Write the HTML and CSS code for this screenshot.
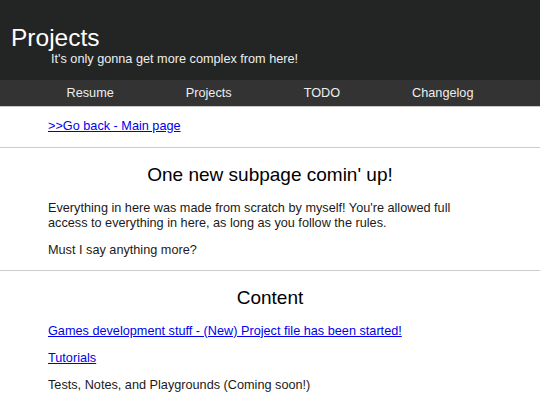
FILE: index.html
```html
<!DOCTYPE html>
<html lang="en">
<head>
    <meta charset="UTF-8">
    <meta name="viewport" content="width=device-width, initial-scale=1.0">
    <title>Projects</title>
    <link rel="stylesheet" href="styles.css">
</head>
<body>
    <header class="top">
        <h1 class="title">Projects</h1>
        <p class="subtitle">It's only gonna get more complex from here!</p>
    </header>
    <nav class="menu">
        <a href="#">Resume</a>
        <a href="#">Projects</a>
        <a href="#">TODO</a>
        <a href="#">Changelog</a>
    </nav>
    <main>
        <section class="block back">
            <a href="#">&gt;&gt;Go back - Main page</a>
        </section>
        <section class="block">
            <h2>One new subpage comin' up!</h2>
            <p>Everything in here was made from scratch by myself! You're allowed full access to everything in here, as long as you follow the rules.</p>
            <p>Must I say anything more?</p>
        </section>
        <section class="block last">
            <h2>Content</h2>
            <p><a href="#">Games development stuff - (New) Project file has been started!</a></p>
            <p><a href="#">Tutorials</a></p>
            <p>Tests, Notes, and Playgrounds (Coming soon!)</p>
        </section>
    </main>
</body>
</html>
```

FILE: styles.css
```css
body {
    font-family: "Liberation Sans", Arial, sans-serif;
    font-size: 12.7px;
    line-height: 14.7px;
    margin: 0;
    color: #1a1a1a;
    background: #fff;
}
a {
    color: #0000ee;
}
.top {
    background: #232525;
    color: #fff;
    padding: 24px 11px 13px;
}
.title {
    font-size: 24.5px;
    font-weight: normal;
    line-height: 28px;
    margin: 0;
}
.subtitle {
    margin: 0 0 0 40px;
    line-height: 15px;
    color: #eee;
}
.menu {
    background: #333;
    display: flex;
    justify-content: center;
    gap: 72px;
    padding: 6px 0 5px;
    line-height: 15px;
    border-bottom: 1px solid #c8c8c8;
}
.menu a {
    color: #eee;
    text-decoration: none;
}
.block {
    padding: 16.4px 48px 11.5px;
    border-bottom: 1px solid #ccc;
}
.block.back {
    padding: 12px 48px 13px;
}
.block.last {
    border-bottom: none;
}
h2 {
    font-size: 19px;
    font-weight: normal;
    line-height: 22px;
    text-align: center;
    color: #000;
    margin: 0 0 15px;
}
p {
    max-width: 410px;
    margin: 0 0 12.8px;
}
.block p:last-child {
    margin-bottom: 0;
}
.last p {
    margin-bottom: 12.5px;
}
```
